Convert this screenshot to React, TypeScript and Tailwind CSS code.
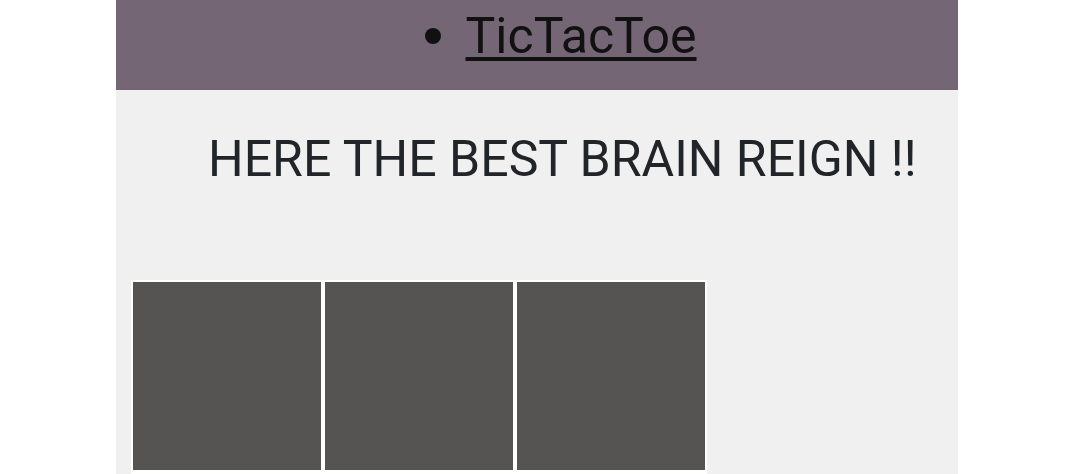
export default function App() {
  return (
    <div className="w-full min-h-[474px] bg-white" style={{ fontFamily: "Roboto, 'Noto Sans', sans-serif" }}>
      <div className="ml-[116px] w-[842px] min-h-[474px] bg-[#f0f0f0]">
        <div className="h-[90px] bg-[#756675]">
          <ul className="flex justify-center pl-[48px] pt-[11px] text-[50px] leading-none text-[#111111]">
            <li className="flex items-center gap-[24px]">
              <span className="block w-[16px] h-[16px] rounded-full bg-[#111111]" />
              <a href="#" className="underline decoration-[4px] underline-offset-[4px]">TicTacToe</a>
            </li>
          </ul>
        </div>
        <h1 className="mt-[44px] pl-[92px] text-[50px] leading-none text-[#212529] font-normal">HERE THE BEST BRAIN REIGN !!</h1>
        <div className="mt-[96px] ml-[15px] grid grid-cols-[repeat(3,192px)]">
          {Array.from({ length: 9 }).map((_, i) => (
            <div key={i} className="h-[192px] border-2 border-white bg-[#555452]" />
          ))}
        </div>
      </div>
    </div>
  );
}
